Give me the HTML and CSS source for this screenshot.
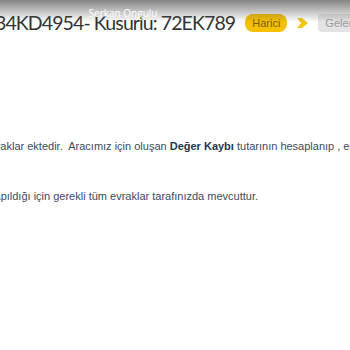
FILE: index.html
```html
<!DOCTYPE html>
<html lang="tr">
<head>
    <meta charset="UTF-8">
    <title>Dosya</title>
    <link rel="stylesheet" href="styles.css">
</head>
<body>
    <div class="shade">
        <span class="owner">Serkan Ongulu</span>
    </div>
    <div class="page">
        <div class="header">
            <h1>34KD4954- Kusurlu: 72EK789</h1>
            <span class="badge harici">Harici</span>
            <span class="arrow">
                <svg width="11" height="10" viewBox="0 0 11 10"><path d="M0 0 H5 L11 5 L5 10 H0 L4 5 Z" fill="#f5c518"/></svg>
            </span>
            <span class="badge gelen">Gelen</span>
        </div>

        <p class="mail first">Ekte evraklar ektedir.&nbsp; Aracımız için oluşan <b>Değer Kaybı</b> tutarının hesaplanıp , eksper raporu ile birlikte</p>
        <p class="mail second">Yapıldığı için gerekli tüm evraklar tarafınızda mevcuttur.</p>
    </div>
</body>
</html>
```

FILE: styles.css
```css
body {
    margin: 0;
    background: #fff;
    overflow: hidden;
    font-family: "Liberation Sans", Arial, sans-serif;
}

.shade {
    position: absolute;
    top: 0;
    left: 0;
    right: 0;
    height: 22px;
    background: linear-gradient(to bottom, rgba(90, 90, 90, 0.75), rgba(255, 255, 255, 0));
    text-align: center;
    z-index: 2;
}

.owner {
    display: inline-block;
    margin-left: -104px;
    margin-top: 6px;
    font-family: "Open Sans", sans-serif;
    font-size: 10px;
    color: #fff;
}

.page {
    width: 700px;
}

.header {
    display: flex;
    align-items: center;
    gap: 10px;
    margin-left: -5px;
    padding-top: 11px;
    white-space: nowrap;
}

h1 {
    margin: 0;
    font-family: Lato, sans-serif;
    font-weight: 400;
    font-size: 19.5px;
    letter-spacing: -0.9px;
    color: #333;
}

.badge {
    font-family: "Liberation Sans", sans-serif;
    font-size: 11px;
    padding: 3px 7px;
    border-radius: 8px;
}

.harici {
    background: #f5c000;
    color: #7a5c00;
}

.gelen {
    background: #e3e3e3;
    color: #9a9a9a;
    border-radius: 4px;
}

.arrow {
    display: flex;
}

.mail {
    margin: 0;
    font-size: 11px;
    color: #3c4a5e;
    white-space: nowrap;
}

.mail b {
    color: #253550;
}

.first {
    margin-top: 106px;
    margin-left: -40px;
}

.second {
    margin-top: 38px;
    margin-left: -12px;
}
```
